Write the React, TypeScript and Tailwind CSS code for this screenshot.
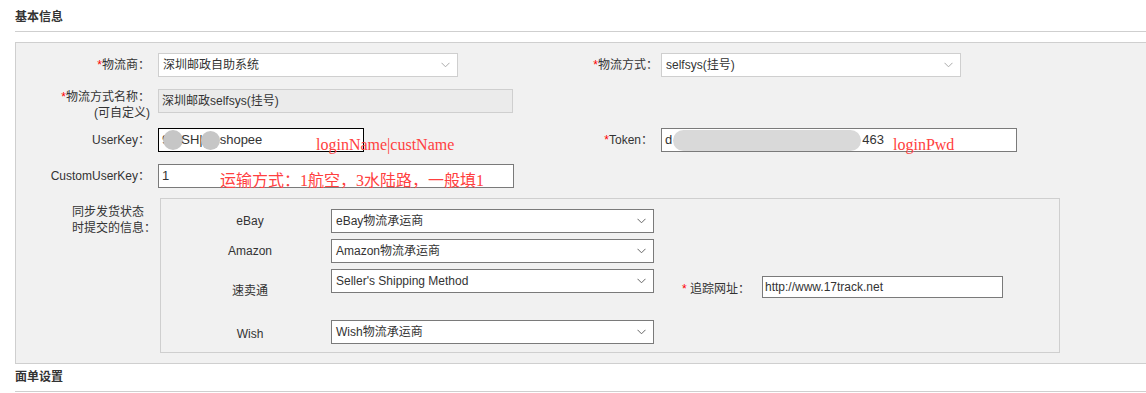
import React from "react"

const font = "font-['Liberation_Sans','Noto_Sans_CJK_SC',sans-serif]"

function Chevron({ dark }: { dark?: boolean }) {
  return (
    <svg width="9" height="6" viewBox="0 0 9 6" className="shrink-0">
      <path d="M0.5 0.8 L4.5 4.8 L8.5 0.8" fill="none" stroke={dark ? "#666" : "#aaa"} strokeWidth="1" />
    </svg>
  )
}

function Select({ value, w, dark }: { value: string; w: string; dark?: boolean }) {
  return (
    <div
      className={`flex h-[24px] items-center justify-between bg-white pl-[4px] pr-[7px] text-[12px] text-[#333] ${w} ${
        dark ? "border border-[#7a7a7a]" : "border border-[#cfcfcf]"
      }`}
    >
      <span>{value}</span>
      <Chevron dark={dark} />
    </div>
  )
}

function Star() {
  return <span className="text-[#ff0000]">*</span>
}

function Heading({ text }: { text: string }) {
  return (
    <div className="border-b border-[#cfcfcf] pb-[6px] text-[12px] leading-[16px] font-bold text-[#333]">{text}</div>
  )
}

export default function App() {
  return (
    <div className={`${font} min-h-[393px] w-[1146px] overflow-hidden bg-white pl-[15px] pt-[9px] text-[12px] text-[#333]`}>
      <Heading text="基本信息" />

      <div className="mt-[10px] border border-r-0 border-[#cfcfcf] bg-[#f1f1f1] pb-[10px] pt-[10px]">
        {/* row 1 */}
        <div className="flex h-[24px] items-center">
          <div className="w-[134px] text-right">
            <Star />物流商：
          </div>
          <div className="ml-[8px]">
            <Select value="深圳邮政自助系统" w="w-[300px]" />
          </div>
          <div className="w-[203px] pr-[3px] text-right">
            <Star />物流方式：
          </div>
          <Select value="selfsys(挂号)" w="w-[300px]" />
        </div>

        {/* row 2 */}
        <div className="mt-[12px] flex items-start">
          <div className="w-[134px] text-right leading-[16px]">
            <div>
              <Star />物流方式名称：
            </div>
            <div>(可自定义)</div>
          </div>
          <div className="ml-[8px] flex h-[24px] w-[355px] items-center border border-[#cfcfcf] bg-[#ebebeb] pl-[3px]">
            深圳邮政selfsys(挂号)
          </div>
        </div>

        {/* row 3 */}
        <div className="relative mt-[7px] flex h-[24px] items-center">
          <div className="w-[134px] text-right">UserKey：</div>
          <div className="ml-[8px] flex h-[24px] w-[206px] items-center overflow-hidden border border-black bg-white pl-[3px] text-[13px]">
            <span>9</span>
            <span className="-ml-[6px] inline-block h-[20px] w-[20px] rounded-full bg-[#c6c6c6]" />
            <span className="-ml-[2px]">SH|</span>
            <span className="-ml-[2px] inline-block h-[19px] w-[19px] rounded-full bg-[#c6c6c6]" />
            <span>shopee</span>
          </div>
          <div className="w-[297px] pr-[8px] text-right">
            <Star />Token：
          </div>
          <div className="flex h-[24px] w-[356px] items-center border border-[#7a7a7a] bg-white pl-[3px] text-[13px]">
            <span>d</span>
            <span className="mx-[1px] inline-block h-[21px] w-[188px] rounded-full bg-[#d9d9d9]" />
            <span>463</span>
          </div>
          <span className="absolute left-[300px] top-[8px] font-['Liberation_Serif','Noto_Sans_CJK_SC',serif] text-[16px] leading-[18px] text-[#ff4040]">
            loginName|custName
          </span>
          <span className="absolute left-[877px] top-[8px] font-['Liberation_Serif','Noto_Sans_CJK_SC',serif] text-[16px] leading-[18px] text-[#ff4040]">
            loginPwd
          </span>
        </div>

        {/* row 4 */}
        <div className="relative mt-[12px] flex h-[24px] items-center">
          <div className="w-[134px] text-right">CustomUserKey：</div>
          <div className="ml-[8px] flex h-[24px] w-[356px] items-center border border-[#7a7a7a] bg-white pl-[3px] text-[13px]">
            1
          </div>
          <span className="absolute left-[204px] top-[8px] font-['Liberation_Serif','Noto_Sans_CJK_SC',serif] text-[16px] leading-[18px] text-[#ff4040]">
            运输方式：1航空，3水陆路，一般填1
          </span>
        </div>

        {/* row 5 */}
        <div className="mt-[10px] flex items-start">
          <div className="w-[144px] pl-[56px] pt-[6px] leading-[16px]">
            <div>同步发货状态</div>
            <div>时提交的信息：</div>
          </div>
          <div className="w-[900px] border border-[#cfcfcf] pb-[8px] pt-[10px]">
            <div className="flex h-[24px] items-center">
              <div className="w-[170px] pl-[8px] text-center">eBay</div>
              <Select value="eBay物流承运商" w="w-[323px]" dark />
            </div>
            <div className="mt-[6px] flex h-[24px] items-center">
              <div className="w-[170px] pl-[8px] text-center">Amazon</div>
              <Select value="Amazon物流承运商" w="w-[323px]" dark />
            </div>
            <div className="mt-[6px] flex h-[42px] items-start">
              <div className="flex h-[42px] w-[170px] items-center justify-center pl-[8px] pt-[2px]">速卖通</div>
              <Select value="Seller's Shipping Method" w="w-[323px]" dark />
              <div className="ml-[28px] mt-[7px] flex items-center">
                <div className="w-[80px] pt-[3px]">
                  <span className="text-[#ff0000]">*</span> 追踪网址：
                </div>
                <div className="flex h-[22px] w-[241px] items-center border border-[#7a7a7a] bg-white pl-[2px] text-[12px]">
                  http://www.17track.net
                </div>
              </div>
            </div>
            <div className="mt-[9px] flex h-[24px] items-center">
              <div className="w-[170px] pl-[8px] pt-[3px] text-center">Wish</div>
              <Select value="Wish物流承运商" w="w-[323px]" dark />
            </div>
          </div>
        </div>
      </div>

      <div className="mt-[5px]">
        <Heading text="面单设置" />
      </div>
    </div>
  )
}
